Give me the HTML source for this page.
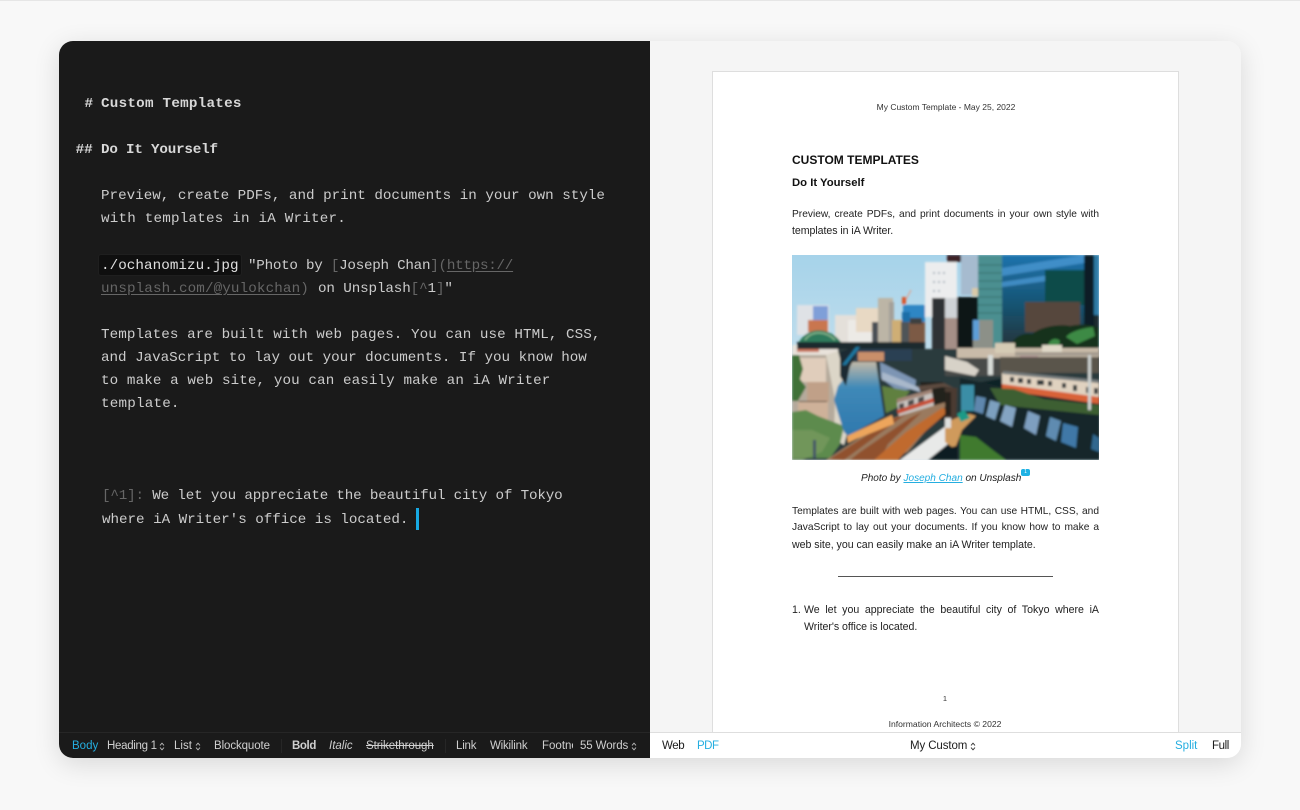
<!DOCTYPE html>
<html><head><meta charset="utf-8"><title>Custom Templates</title>
<style>
*{box-sizing:border-box}
html,body{margin:0;padding:0;width:1300px;height:810px;overflow:hidden;background:#f8f8f8}
body{position:relative;font-family:"Liberation Sans",sans-serif;border-top:1px solid #e6e6e6}
#win{position:absolute;left:59px;top:40px;width:1182px;height:717px;border-radius:14px;overflow:hidden;background:#f5f5f5}
#shadow{position:absolute;left:59px;top:40px;width:1182px;height:717px;border-radius:14px;box-shadow:0 6px 26px rgba(0,0,0,.13)}
.abs,.m,.t,.b{position:absolute}
.m{font-family:"Liberation Mono",monospace;font-size:14.24px;line-height:23px;height:23px;color:#cccccc;white-space:pre}
.h{font-weight:700;color:#d8d8d8}
.d{color:#666}
.u{color:#666;text-decoration:underline;text-underline-offset:2px}
.t{font-size:10.6px;line-height:16px;height:16px;color:#222;text-align:justify;text-align-last:justify}
.f{font-size:10.2px}
.s{white-space:nowrap;text-align:left;text-align-last:left}
.c{text-align:center;text-align-last:center}
.b{font-size:11.5px;line-height:16px;height:16px;top:737px;color:#cfcfcf;white-space:nowrap}
.w{color:#1c1c1c}
.blue{color:#25aee0}
svg.ch{position:absolute;top:741px;width:6px;height:9px;fill:none;stroke-width:.9}
</style></head><body>
<div id="shadow"></div>
<div id="win">
<div class="abs" style="left:0;top:0;width:591px;height:717px;background:#1a1a1a"></div>
<div class="abs" style="left:653px;top:30px;width:467px;height:670px;background:#fff;border:1px solid #dedede"></div>
<div class="abs" style="left:591px;top:691px;width:591px;height:26px;background:#fff;border-top:1px solid #dedede"></div>
<div class="abs" style="left:0;top:691px;width:591px;height:1px;background:#262626"></div>
</div>

<div class="abs" style="left:98px;top:253px;width:144px;height:22px;background:#0f0f0f;border:1px solid #1f1f1f;border-radius:3px"></div>
<div class="m h" style="left:84.5px;top:92px">#</div>
<div class="m h" style="left:101px;top:92px;letter-spacing:.25px">Custom Templates</div>
<div class="m h" style="left:75.6px;top:138px">##</div>
<div class="m h" style="left:101px;top:138px;letter-spacing:-.2px">Do It Yourself</div>
<div class="m" style="left:101px;top:184px">Preview, create PDFs, and print documents in your own style</div>
<div class="m" style="left:101px;top:207px;letter-spacing:.21px">with templates in iA Writer.</div>
<div class="m" style="left:101px;top:254px;letter-spacing:.06px;color:#e0e0e0">./ochanomizu.jpg</div>
<div class="m" style="left:248px;top:254px;letter-spacing:-.26px">"Photo by <span class="d">[</span>Joseph Chan<span class="d">](</span><span class="u">https://</span></div>
<div class="m" style="left:101px;top:277px;letter-spacing:.12px"><span class="u">unsplash.com/@yulokchan</span><span class="d">)</span></div>
<div class="m" style="left:318px;top:277px;letter-spacing:-.12px">on Unsplash<span class="d">[^</span>1<span class="d">]</span>"</div>
<div class="m" style="left:101px;top:323px;letter-spacing:.07px">Templates are built with web pages. You can use HTML, CSS,</div>
<div class="m" style="left:101px;top:346px;letter-spacing:-.02px">and JavaScript to lay out your documents. If you know how</div>
<div class="m" style="left:101px;top:369px;letter-spacing:.1px">to make a web site, you can easily make an iA Writer</div>
<div class="m" style="left:101px;top:392px;letter-spacing:.2px">template.</div>
<div class="m" style="left:102px;top:484px;letter-spacing:-.17px"><span class="d">[^1]:</span> We let you appreciate the beautiful city of Tokyo</div>
<div class="m" style="left:102px;top:508px;letter-spacing:-.03px">where iA Writer's office is located.</div>
<div class="abs" style="left:416px;top:507px;width:3px;height:22px;background:#17a9e3"></div>

<div class="t c" style="left:846px;width:200px;top:98px;font-size:8.5px;color:#333">My Custom Template - May 25, 2022</div>
<div class="t s" style="left:792px;top:151px;font-size:12px;font-weight:700;color:#111">CUSTOM TEMPLATES</div>
<div class="t s" style="left:792px;top:174px;font-size:11.3px;font-weight:700;color:#111">Do It Yourself</div>
<div class="t f" style="left:792px;width:307px;top:206px">Preview, create PDFs, and print documents in your own style with</div>
<div class="t s" style="left:792px;top:222px;letter-spacing:-.05px">templates in iA Writer.</div>

<svg class="abs" style="left:792px;top:254px" width="307" height="205" viewBox="792 255 307 205">
<defs>
<linearGradient id="sky" x1="0" y1="0" x2="0" y2="1"><stop offset="0" stop-color="#a6d3ea"/><stop offset="1" stop-color="#dbe8ee"/></linearGradient>
<linearGradient id="glass" x1="0" y1="0" x2="0" y2="1"><stop offset="0" stop-color="#1e73ad"/><stop offset=".6" stop-color="#17506c"/><stop offset="1" stop-color="#27343a"/></linearGradient>
<linearGradient id="water" x1="0" y1="0" x2="0" y2="1"><stop offset="0" stop-color="#c0b8a8"/><stop offset=".35" stop-color="#3f89b8"/><stop offset="1" stop-color="#2f78ad"/></linearGradient>
<filter id="bl" x="-5%" y="-5%" width="110%" height="110%"><feGaussianBlur stdDeviation="1"/></filter>
<clipPath id="cp"><rect x="792" y="255" width="307" height="205"/></clipPath>
</defs>
<g clip-path="url(#cp)">
<rect x="792" y="255" width="307" height="205" fill="url(#sky)"/>
<g filter="url(#bl)">
<!-- left skyline -->
<rect x="797" y="305" width="32" height="30" fill="#dfe2e6"/><rect x="813" y="306" width="15" height="16" fill="#7f9fd8"/>
<rect x="808" y="320" width="20" height="12" fill="#c9764f"/>
<rect x="835" y="315" width="32" height="30" fill="#e4e0da"/><rect x="848" y="320" width="25" height="28" fill="#eceae6"/>
<rect x="856" y="308" width="24" height="24" fill="#e8d9c4"/>
<rect x="872" y="322" width="12" height="30" fill="#4a4f55"/>
<rect x="878" y="298" width="15" height="50" fill="#bcb5a6"/><rect x="889" y="302" width="5" height="45" fill="#a4a099"/>
<rect x="892" y="320" width="11" height="28" fill="#cfae74"/>
<rect x="903" y="305" width="22" height="17" fill="#2f86c4"/><rect x="902" y="312" width="8" height="12" fill="#1f6ea8"/>
<rect x="908" y="322" width="17" height="30" fill="#7b5a44"/><rect x="910" y="318" width="12" height="6" fill="#3e3f40"/>
<rect x="901" y="322" width="8" height="28" fill="#505458"/>
<path d="M903 305 L911 290 M903 305 L905 298" stroke="#e1a08c" stroke-width="1.2"/><rect x="902" y="297" width="4" height="7" fill="#d8572c"/>
<!-- white building -->
<rect x="925" y="262" width="32" height="55" fill="#ecedee"/>
<g fill="#a9b3bd"><rect x="933" y="272" width="2" height="2"/><rect x="938" y="272" width="2" height="2"/><rect x="943" y="272" width="2" height="2"/><rect x="933" y="281" width="2" height="2"/><rect x="938" y="281" width="2" height="2"/><rect x="943" y="281" width="2" height="2"/><rect x="933" y="290" width="2" height="2"/><rect x="938" y="290" width="2" height="2"/></g>
<rect x="947" y="255" width="14" height="7" fill="#3c2426"/>
<rect x="961" y="255" width="20" height="40" fill="#a6bbcf"/>
<rect x="972" y="288" width="8" height="8" fill="#d8c9a8"/>
<rect x="932" y="298" width="14" height="55" fill="#2e3034"/>
<rect x="945" y="298" width="13" height="52" fill="#cfd3d6"/>
<rect x="945" y="318" width="13" height="34" fill="#a58f87"/>
<rect x="957" y="297" width="21" height="52" fill="#111214"/>
<!-- towers -->
<rect x="978" y="255" width="25" height="95" fill="#4b8f90"/>
<g stroke="#2a6766" stroke-width=".7"><path d="M978 265h25M978 273h25M978 281h25M978 289h25M978 297h25M978 305h25M978 313h25"/></g>
<rect x="1002" y="255" width="83" height="92" fill="url(#glass)"/>
<path d="M1002 268l82-13v8l-82 13zM1002 282l82-12v6l-82 11z" fill="#4d99d4" opacity=".75"/>
<rect x="1045" y="270" width="40" height="35" fill="#114b4a"/>
<rect x="1025" y="302" width="55" height="30" fill="#56463e"/>
<rect x="1084" y="255" width="10" height="92" fill="#111e26"/>
<rect x="1094" y="255" width="5" height="60" fill="#2f7aa5"/><rect x="1094" y="315" width="5" height="35" fill="#1a2a2f"/>
<rect x="973" y="320" width="20" height="28" fill="#8c9088"/><rect x="973" y="320" width="6" height="20" fill="#5d9ed8"/>
<path d="M1008 352c3-14 14-20 24-18 10-8 28-10 38-8 10-2 20-2 29 2v24z" fill="#15301c"/>
<path d="M1066 337c5-6 18-9 27-10l2 9-18 8zM1048 345c2-6 8-8 12-4l-2 8z" fill="#3d8a44"/>
<!-- bridge -->
<path d="M799 342c8-15 30-16 42 0z" fill="#2f7a5c"/><path d="M805 340c6-9 20-10 30 0" fill="none" stroke="#88b78e" stroke-width="1.5"/>
<!-- mid ground -->
<rect x="792" y="349" width="308" height="111" fill="#2b3a3c"/>
<rect x="852" y="349" width="60" height="12" fill="#2a3f52"/>
<rect x="858" y="352" width="26" height="9" fill="#c98f6a"/>
<!-- left houses -->
<rect x="792" y="349" width="45" height="76" fill="#b5aa9c"/>
<rect x="792" y="345" width="46" height="10" fill="#e8e2da"/>
<rect x="797" y="347" width="22" height="5" fill="#c9765f"/>
<rect x="798" y="358" width="28" height="24" fill="#e0cdbb"/>
<rect x="807" y="382" width="22" height="20" fill="#c0a088"/>
<rect x="799" y="401" width="28" height="3" fill="#4d3c33"/>
<rect x="798" y="402" width="30" height="18" fill="#ceb199"/>
<path d="M826 355l12-4 8 30 6 34-8 30-10-6 1-40z" fill="#dcd6c8"/>
<path d="M792 355h7l4 14-3 10 6 8-8 14h-6z" fill="#3f7237"/>
<path d="M792 412l14-2 12 6 26 10-4 18-10 14h-38z" fill="#5d8b4e"/>
<path d="M792 430h20l18 8-8 14-20 8h-10z" fill="#77985e" opacity=".8"/>
<rect x="813" y="440" width="3" height="18" fill="#456"/>
<!-- canal -->
<path d="M852 362h24l8 54-36 20-4-4-10-32 4-14 8-10z" fill="url(#water)"/>
<path d="M840 352l12-4 4 8-6 10-4 20-6-10z" fill="#1c2a30"/>
<rect x="797" y="342" width="128" height="7" fill="#1f2b2f"/>
<path d="M842 365l14-18h4l-14 18z" fill="#1a78a2"/>
<!-- right embankment near canal -->
<path d="M880 362l36 18-1 8-16 4-18-14z" fill="#7d95b4"/>
<path d="M882 386l16 3 12 2-12 16-12 6z" fill="#61803f"/>
<path d="M882 372l20 8 18 8v4l-38-12z" fill="#a9b8cb"/>
<path d="M920 382h22l10 6v32h-14l-13-6z" fill="#22201f"/>
<path d="M918 386l26-3 10 5-12-1-22 4z" fill="#5d4b40"/>
<!-- train -->
<path d="M897 402l35-10 2 14-35 12z" fill="#c8c3bf"/>
<path d="M897 399l35-10v4l-35 10z" fill="#a08476"/>
<path d="M897 410l36-12 1 4-36 12z" fill="#c74f35"/>
<path d="M899 404l5-1v5l-5 1zM908 401l6-2v5l-6 2zM918 398l6-2v5l-6 2z" fill="#4c4a4a"/>
<!-- tracks -->
<path d="M826 460l60-40 60-18v4l-8 10-30 36-20 8z" fill="#9a7a5e"/>
<path d="M830 459l62-40 14-5-62 46zM860 452l50-34 12-6-34 32-8 16h-30z" fill="#8e4a27" opacity=".85"/>
<path d="M874 460l32-28 36-24 8 2-30 26-22 24z" fill="#c06a2d"/>
<path d="M848 443l-1-7 45-21 2 9-38 15z" fill="#eda55c"/>
<path d="M900 460l50-37 8-3v16l-30 24z" fill="#e8e9e8"/>
<path d="M928 460l30-24v24z" fill="#0f1b22"/>
<!-- rail right -->
<rect x="957" y="348" width="142" height="10" fill="#c9bba9"/>
<rect x="995" y="343" width="20" height="10" fill="#d5cbb5"/><rect x="1020" y="352" width="18" height="6" fill="#b99"/><rect x="1042" y="345" width="20" height="8" fill="#e0d9c8"/>
<rect x="1015" y="352" width="85" height="4" fill="#a59b8f"/>
<rect x="945" y="358" width="60" height="18" fill="#4a4c48"/>
<path d="M945 356l22 6 12 8-4 6-30-6z" fill="#d7d2c8"/>
<rect x="988" y="355" width="5" height="20" fill="#d8dcd8"/>
<rect x="1000" y="357" width="99" height="16" fill="#5a554c"/>
<!-- retaining wall -->
<path d="M965 385l34-6 100 12v69h-134z" fill="#0f2426"/>
<path d="M960 378l40 8 99 18v56h-140z" fill="#12282a"/>
<!-- right train -->
<path d="M1002 373l97 10v18l-97-14z" fill="#e0d2c0"/>
<path d="M1002 384l97 13v7l-97-14z" fill="#d96238"/>
<path d="M1003 371l96 9v3l-96-9z" fill="#777d7e"/>
<g fill="#33383a"><rect x="1010" y="377" width="4" height="5"/><rect x="1018" y="378" width="5" height="5"/><rect x="1027" y="379" width="4" height="5"/><rect x="1037" y="380" width="7" height="5"/><rect x="1048" y="381" width="4" height="5"/><rect x="1062" y="383" width="4" height="5"/><rect x="1073" y="385" width="4" height="6"/><rect x="1086" y="387" width="4" height="6"/><rect x="1094" y="388" width="4" height="6"/></g>
<path d="M990 388l24 1 30 10 55 6v10l-99-10z" fill="#3e5e33"/>
<rect x="1088" y="355" width="3" height="55" fill="#cdd2d0"/>
<!-- arches -->
<path d="M976 396l10 2-3 16-9-3z" fill="#5f87ad"/>
<path d="M990 400l10 3-5 17-9-4z" fill="#7da0bf"/>
<path d="M1005 405l11 3-4 19-12-6z" fill="#84a4c2"/>
<path d="M1028 411l12 5-4 19-12-7z" fill="#7e9fc0"/>
<path d="M1050 417l11 4-5 20-10-5z" fill="#5f8bb0"/>
<path d="M1063 423l15 4-2 21-15-6z" fill="#3f78a7"/>
<path d="M1093 434l6 4v14l-8-3z" fill="#32688f"/>
<!-- lower centre -->
<path d="M945 388h12l-1 32-11 8z" fill="#4b3a30"/>
<rect x="945" y="392" width="6" height="24" fill="#27211d"/>
<rect x="961" y="385" width="13" height="26" fill="#3a8ea6"/>
<path d="M945 423l18-8 7-1 6 2-14 14-6 16-4 1-7-5z" fill="#cf9a5b"/>
<rect x="945" y="418" width="6" height="10" fill="#dfe0de"/>
<path d="M957 414l7-4 6 8-9 4z" fill="#1f9a87"/>
<path d="M960 435l16 2 18 14 12 9h-46z" fill="#3f7a2e"/>
</g>
</g>
</svg>

<div class="t s" style="left:861px;top:470px;font-style:italic;font-size:10.05px">Photo by <span style="color:#25aee0;text-decoration:underline">Joseph Chan</span> on Unsplash</div>
<div class="abs" style="left:1021px;top:468px;width:9px;height:7px;border-radius:2px;background:#1fb2e4;color:#fff;font-size:5px;line-height:7px;text-align:center">1</div>
<div class="t f" style="left:792px;width:307px;top:503px">Templates are built with web pages. You can use HTML, CSS, and</div>
<div class="t f" style="left:792px;width:307px;top:519px">JavaScript to lay out your documents. If you know how to make a</div>
<div class="t s" style="left:792px;top:536px;letter-spacing:-.02px">web site, you can easily make an iA Writer template.</div>
<div class="abs" style="left:838px;top:575px;width:215px;height:1px;background:#555"></div>
<div class="t s" style="left:792px;top:601px">1.</div>
<div class="t" style="left:804px;width:295px;top:601px">We let you appreciate the beautiful city of Tokyo where iA</div>
<div class="t s" style="left:804px;top:618px;letter-spacing:-.03px">Writer's office is located.</div>
<div class="t c" style="left:935px;width:20px;top:690px;font-size:7.5px;color:#333">1</div>
<div class="t c" style="left:845px;width:200px;top:715px;font-size:8.6px;color:#333">Information Architects © 2022</div>

<div class="b blue" style="left:72px">Body</div>
<div class="b" style="left:107px;letter-spacing:-.3px">Heading 1</div>
<svg class="ch" style="left:159px" viewBox="0 0 6 9" stroke="#bbb"><path d="M1 3.4 3 1.2 5 3.4M1 5.6 3 7.8 5 5.6"/></svg>
<div class="b" style="left:174px">List</div>
<svg class="ch" style="left:195px" viewBox="0 0 6 9" stroke="#bbb"><path d="M1 3.4 3 1.2 5 3.4M1 5.6 3 7.8 5 5.6"/></svg>
<div class="b" style="left:214px;letter-spacing:-.1px">Blockquote</div>
<div class="abs" style="left:281px;top:738px;width:1px;height:14px;background:#262626"></div>
<div class="b" style="left:292px;font-weight:700;letter-spacing:-.4px">Bold</div>
<div class="b" style="left:329px;font-style:italic">Italic</div>
<div class="b" style="left:366px;text-decoration:line-through;letter-spacing:-.05px">Strikethrough</div>
<div class="abs" style="left:445px;top:738px;width:1px;height:14px;background:#262626"></div>
<div class="b" style="left:456px;letter-spacing:-.2px">Link</div>
<div class="b" style="left:490px;letter-spacing:-.2px">Wikilink</div>
<div class="b" style="left:542px;width:31px;overflow:hidden">Footnote</div>
<div class="b" style="left:580px;letter-spacing:-.1px">55 Words</div>
<svg class="ch" style="left:631px" viewBox="0 0 6 9" stroke="#bbb"><path d="M1 3.4 3 1.2 5 3.4M1 5.6 3 7.8 5 5.6"/></svg>

<div class="b w" style="left:662px;letter-spacing:-.4px">Web</div>
<div class="b blue" style="left:697px;letter-spacing:-.5px">PDF</div>
<div class="b w" style="left:910px;letter-spacing:-.1px">My Custom</div>
<svg class="ch" style="left:970px" viewBox="0 0 6 9" stroke="#333"><path d="M1 3.4 3 1.2 5 3.4M1 5.6 3 7.8 5 5.6"/></svg>
<div class="b blue" style="left:1175px">Split</div>
<div class="b w" style="left:1212px;letter-spacing:-.4px">Full</div>
</body></html>
